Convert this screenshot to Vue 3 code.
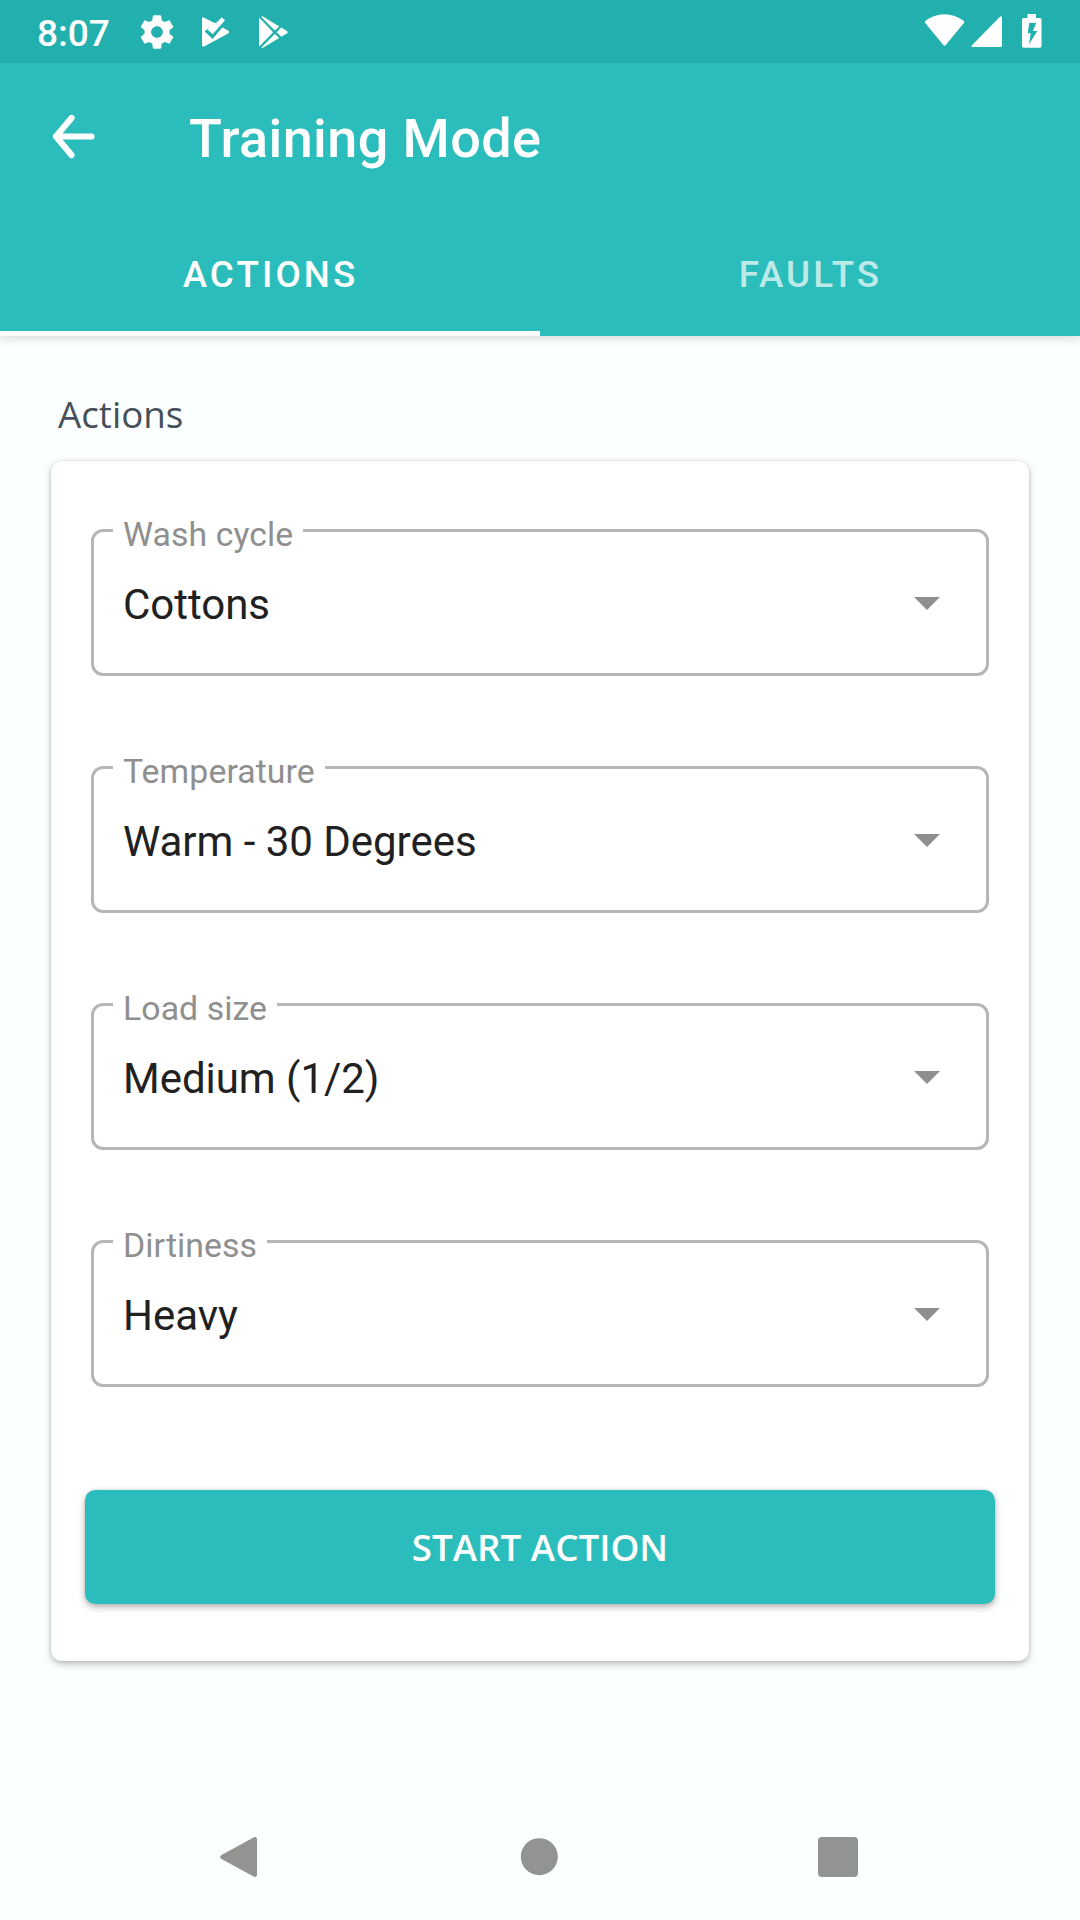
<script setup>
const fields = [
  { label: 'Wash cycle', value: 'Cottons' },
  { label: 'Temperature', value: 'Warm - 30 Degrees' },
  { label: 'Load size', value: 'Medium (1/2)' },
  { label: 'Dirtiness', value: 'Heavy' },
]
</script>

<template>
  <div class="screen">
    <header class="top">
      <div class="status">
        <span class="clock">8:07</span>
        <svg class="gear" width="40" height="40" viewBox="0 0 24 24" fill="#fff">
          <path d="M19.43 12.98c.04-.32.07-.64.07-.98s-.03-.66-.07-.98l2.11-1.65c.19-.15.24-.42.12-.64l-2-3.46c-.12-.22-.39-.3-.61-.22l-2.49 1c-.52-.4-1.08-.73-1.69-.98l-.38-2.65C14.46 2.18 14.25 2 14 2h-4c-.25 0-.46.18-.49.42l-.38 2.65c-.61.25-1.17.59-1.69.98l-2.49-1c-.23-.09-.49 0-.61.22l-2 3.46c-.13.22-.07.49.12.64l2.11 1.65c-.04.32-.07.65-.07.98s.03.66.07.98l-2.11 1.65c-.19.15-.24.42-.12.64l2 3.46c.12.22.39.3.61.22l2.49-1c.52.4 1.08.73 1.69.98l.38 2.65c.03.24.24.42.49.42h4c.25 0 .46-.18.49-.42l.38-2.65c.61-.25 1.17-.59 1.69-.98l2.49 1c.23.09.49 0 .61-.22l2-3.46c.12-.22.07-.49-.12-.64l-2.11-1.65zM12 15.5c-1.93 0-3.5-1.57-3.5-3.5s1.57-3.500 3.500-3.500 3.500 1.570 3.500 3.500-1.570 3.500-3.500 3.500z" />
        </svg>
        <svg class="protect" width="30" height="36" viewBox="0 0 30 36">
          <path d="M2 3.600Q2 2 3.600 2.400L15 8.200L19.500 3L24 6.500L22.500 12.500L28.200 15.600Q30.200 17 28.200 18.400L4.600 31.300Q2 32.400 2 30Z" fill="#fff" />
          <path d="M15.500 9.500L18.500 1.500L29 1.500L27 14.500L23.300 12.500Z" fill="#21b0ae" />
          <path d="M6.800 14.400L12.300 19.600L22 8" fill="none" stroke="#21b0ae" stroke-width="6" />
          <path d="M8.700 12.600L12.500 16L23.300 3.800" fill="none" stroke="#fff" stroke-width="4.600" />
        </svg>
        <svg class="play" width="31" height="36" viewBox="0 0 31 36" fill="#fff">
          <path d="M1 4Q1 2.800 1.800 3.300L15.100 17.200L1.800 31Q1 31.500 1 30.300Z" />
          <path d="M3.400 1.900Q3.600.8 5 1.600L21.200 11.400L16.800 15.500Z" />
          <path d="M3.400 32.500Q3.600 33.600 5 32.800L21.200 23L16.800 18.900Z" />
          <path d="M23.200 12.600L29 16Q30.600 17.200 29 18.400L23.200 21.800L18.600 17.200Z" />
        </svg>
        <svg class="wifi" width="42" height="34" viewBox="0 0 42 34" fill="#fff">
          <path d="M1.200 9.100Q.2 7.700 1.500 6.700C7 2.600 13.500.2 20.500.2S34 2.600 39.600 6.700Q41 7.700 39.900 9.100L21.700 31Q20.500 32.300 19.300 31Z" />
        </svg>
        <svg class="signal" width="32" height="32" viewBox="0 0 32 32" fill="#fff">
          <path d="M1 29.300L29 .7Q31 -.4 31 1.500V29.500Q31 31 29.500 31H1.500Q-.4 31 1 29.300Z" />
        </svg>
        <svg class="battery" width="20" height="34" viewBox="0 0 20 34" fill="#fff">
          <path fill-rule="evenodd" d="M5.500 0H14V4H18Q19.500 4 19.500 5.500V32Q19.500 33.700 18 33.700H1.500Q0 33.700 0 32V5.500Q0 4 1.500 4H5.500ZM7.200 9L5.800 19.300H8.800L6.800 30.500L15.300 17H11L14.200 9Z" />
        </svg>
      </div>
      <div class="appbar">
        <svg class="back" width="46" height="46" viewBox="0 0 46 46" fill="none" stroke="#fff" stroke-width="6.200" stroke-linecap="round" stroke-linejoin="round">
          <path d="M40.500 22.500H5L20.500 4M5 22.500L20.500 41" />
        </svg>
        <h1>Training Mode</h1>
      </div>
      <nav class="tabs">
        <a class="tab active">ACTIONS</a>
        <a class="tab">FAULTS</a>
      </nav>
    </header>

    <main>
      <h2>Actions</h2>
      <section class="card">
        <fieldset v-for="f in fields" :key="f.label" class="field">
          <legend>{{ f.label }}</legend>
          <div class="row">
            <span>{{ f.value }}</span>
            <svg width="26" height="13" viewBox="0 0 26 13"><path d="M0 0H26L13 13Z" fill="#8f8f8f" /></svg>
          </div>
        </fieldset>
        <button>START ACTION</button>
      </section>
    </main>

    <footer class="navbar">
      <svg width="40" height="44" viewBox="0 0 40 44"><path d="M2.500 20.500L35.500 2.500Q37.500 2 37.500 4V40Q37.500 42 35.500 41.500L2.500 23.500Q.5 22 2.500 20.500Z" fill="#929492" stroke="#929492" /></svg>
      <svg width="38" height="38" viewBox="0 0 38 38"><circle cx="19.300" cy="18.700" r="18.500" fill="#929492" /></svg>
      <svg width="40" height="40" viewBox="0 0 40 40"><rect width="40" height="40" rx="4" fill="#929492" /></svg>
    </footer>
  </div>
</template>

<style>
body { margin: 0; background: #fbffff; }
</style>

<style scoped>
.screen {
  width: 1080px;
  height: 1920px;
  display: flex;
  flex-direction: column;
  background: #fbffff;
  font-family: Roboto, sans-serif;
  overflow: hidden;
}
svg { display: block; flex: none; overflow: visible; }
.top { background: #2bbdbb; box-shadow: 0 2px 10px rgba(0, 0, 0, 0.17); color: #fff; }
.status {
  height: 63px;
  box-sizing: border-box;
  padding: 0 38.500px 0 37px;
  display: flex;
  align-items: flex-start;
  background: #21b0ae;
}
.clock { width: 100px; font-size: 37px; font-weight: 500; line-height: 43px; margin-top: 12px; }
.gear { margin-top: 11.500px; }
.protect { margin: 15px 0 0 23px; }
.play { margin: 15px 0 0 28px; }
.wifi { margin: 14px 0 0 auto; }
.signal { margin: 16px 0 0 5px; }
.battery { margin: 14px 0 0 18.500px; }
.appbar { height: 147px; display: flex; align-items: center; padding-left: 51px; }
h1 { margin: 5px 0 0 92px; font-size: 54px; line-height: 62px; font-weight: 500; letter-spacing: 0.400px; }
.tabs { display: flex; height: 126px; }
.tab {
  flex: 1;
  box-sizing: border-box;
  padding: 7px 0 0 1px;
  border-bottom: 5px solid transparent;
  display: flex;
  align-items: center;
  justify-content: center;
  font-size: 36.750px;
  font-weight: 500;
  letter-spacing: 0.084em;
  color: rgba(255, 255, 255, 0.7);
}
.tab.active { color: #fff; border-color: #fff; }
main { flex: 1; padding: 0 51px; }
h2 {
  margin: 53px 0 0 7px;
  height: 72px;
  font: 400 36.750px/50px "Open Sans", sans-serif;
  color: #455059;
}
.card {
  height: 1200px;
  box-sizing: border-box;
  padding: 48px 34px 0;
  background: #fff;
  border-radius: 10.500px;
  box-shadow: 0 3px 7px rgba(0, 0, 0, 0.26), 0 0 3px rgba(0, 0, 0, 0.1);
}
.field {
  box-sizing: border-box;
  height: 167px;
  margin: 0 6px 70px;
  padding: 0 46.500px 0 19px;
  border: 3px solid #b6b6b6;
  border-radius: 12px;
}
legend {
  height: 43px;
  box-sizing: border-box;
  padding: 6px 10px 0;
  font-size: 33.800px;
  line-height: 39px;
  letter-spacing: 0.080px;
  color: #8f8f8f;
}
.row {
  display: flex;
  align-items: center;
  justify-content: space-between;
  height: 50px;
  margin-top: 27px;
  padding-left: 10px;
  font-size: 42px;
  letter-spacing: -0.030px;
  color: #212121;
}
.row svg { margin-bottom: 2px; }
button {
  display: block;
  width: 910px;
  height: 114px;
  margin-top: 103px;
  padding: 0;
  border: 0;
  border-radius: 10.500px;
  background: #2bbdbb;
  color: #fff;
  font: 600 36.750px "Open Sans", sans-serif;
  box-shadow: 0 3px 7px rgba(0, 0, 0, 0.3), 0 0 3px rgba(0, 0, 0, 0.1);
}
.navbar {
  height: 126px;
  box-sizing: border-box;
  padding: 0 222px 0 219px;
  display: flex;
  align-items: center;
  justify-content: space-between;
}
</style>
